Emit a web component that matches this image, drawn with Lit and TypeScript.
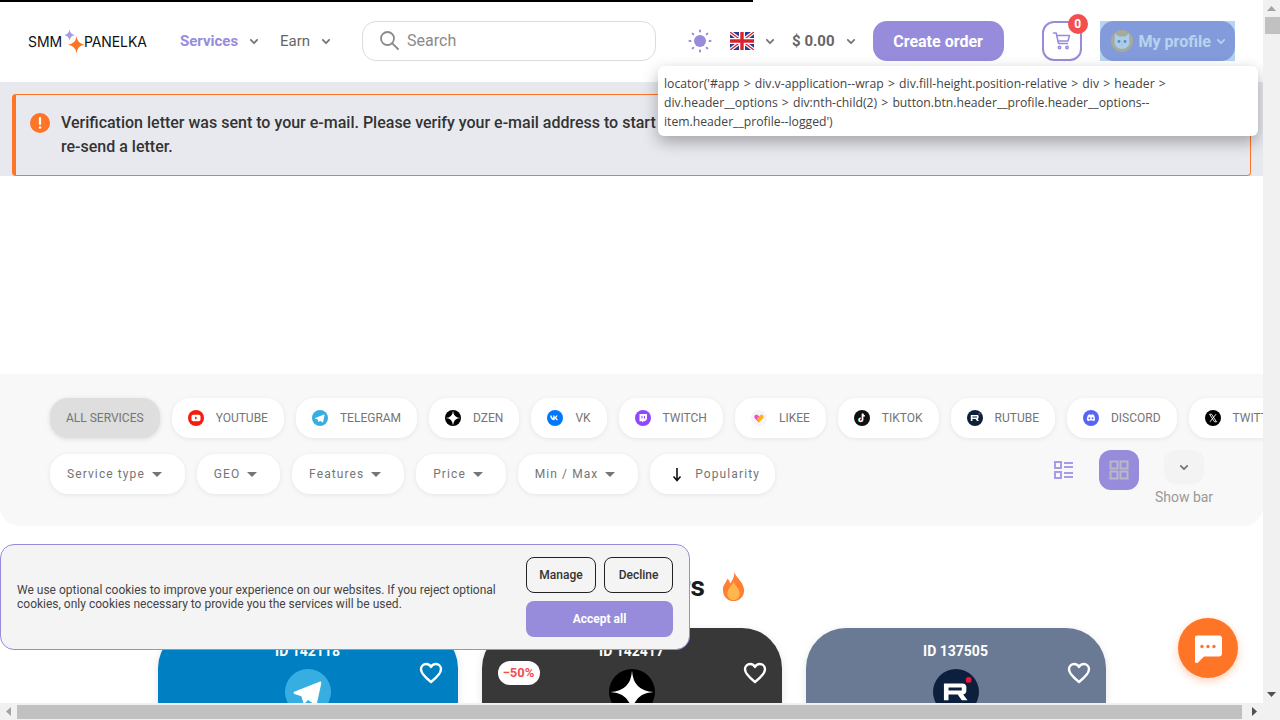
import { LitElement, html, css, svg } from "lit";
import { customElement } from "lit/decorators.js";

const chevron = (color = "#757575") => html`<svg class="chev" width="8" height="5" viewBox="0 0 10 6"><path d="M1 1l4 4 4-4" fill="none" stroke=${color} stroke-width="2.200" stroke-linecap="round" stroke-linejoin="round"/></svg>`;

const star = (cx: number, cy: number, r: number, w: number, fill: string) =>
  svg`<path d="M${cx} ${cy - r}Q${cx + w * 0.25} ${cy - w * 0.25} ${cx + r} ${cy}Q${cx + w * 0.25} ${cy + w * 0.25} ${cx} ${cy + r}Q${cx - w * 0.25} ${cy + w * 0.25} ${cx - r} ${cy}Q${cx - w * 0.25} ${cy - w * 0.25} ${cx} ${cy - r}Z" fill=${fill}/>`;

const heart = html`<svg width="24" height="22" viewBox="0 0 24 22"><path d="M12 20C5 14.5 2 11.300 2 7.300 2 4.200 4.300 2 7.200 2 9.100 2 11 3 12 5 13 3 14.900 2 16.800 2 19.700 2 22 4.200 22 7.300 22 11.300 19 14.500 12 20Z" fill="none" stroke="#fff" stroke-width="2.400" stroke-linejoin="round"/></svg>`;

const plane = (size: number, bg: string) => html`<svg width=${size} height=${size} viewBox="0 0 16 16"><circle cx="8" cy="8" r="8" fill=${bg}/><path d="M3.200 7.900l8.800-3.500c.4-.1.700.1.600.6l-1.500 7c-.1.400-.4.500-.8.300L8 10.800l-1.100 1.100c-.2.200-.4.200-.5-.1l-.7-2.300-2.400-.8c-.4-.2-.4-.6-.1-.8z" fill="#fff"/></svg>`;

const dzen = (size: number) => html`<svg width=${size} height=${size} viewBox="0 0 16 16"><circle cx="8" cy="8" r="8" fill="#000"/><path d="M8 0.500Q8.400 7.600 15.500 8 8.400 8.400 8 15.500 7.600 8.400 0.500 8 7.600 7.600 8 0.500Z" fill="#fff"/></svg>`;

const rutube = (size: number) => html`<svg width=${size} height=${size} viewBox="0 0 16 16"><circle cx="8" cy="8" r="8" fill="#0c1f3c"/><path d="M3.800 5h6.400c.9 0 1.400.5 1.400 1.300v1.300c0 .8-.4 1.200-1.100 1.300l1.500 2h-2l-1.400-2H5.400v2H3.800V5zm1.600 1.400v1.100h4.400c.2 0 .2-.1.200-.2v-.7c0-.1 0-.2-.2-.2H5.400z" fill="#fff"/><circle cx="12.400" cy="3.800" r="1" fill="#ed143b"/></svg>`;

const serviceIcons: Record<string, unknown> = {
  YOUTUBE: html`<svg width="16" height="16" viewBox="0 0 16 16"><circle cx="8" cy="8" r="8" fill="#f61c0d"/><rect x="3.500" y="4.800" width="9" height="6.400" rx="1.800" fill="#fff"/><path d="M7 6.500L9.500 8 7 9.500z" fill="#f61c0d"/></svg>`,
  TELEGRAM: plane(16, "#37aee2"),
  DZEN: dzen(16),
  VK: html`<svg width="16" height="16" viewBox="0 0 16 16"><circle cx="8" cy="8" r="8" fill="#0077ff"/><path d="M3.200 5.400h1.500c.1 1.800.9 2.700 1.500 2.900V5.400h1.400v1.700c.6-.1 1.300-.8 1.500-1.700h1.400c-.2 1.100-1 1.900-1.600 2.300.6.300 1.500 1 1.900 2.500h-1.500c-.3-.9-1-1.600-1.700-1.700v1.700h-.2c-2.600 0-4.100-1.800-4.200-4.800z" fill="#fff"/></svg>`,
  TWITCH: html`<svg width="16" height="16" viewBox="0 0 16 16"><circle cx="8" cy="8" r="8" fill="#9146ff"/><path d="M4.500 4h7.500v5.200L10 11.200H8.300L7 12.500v-1.300H4.500z" fill="#fff"/><path d="M7 6v2.500M9.500 6v2.500" stroke="#9146ff" stroke-width="1"/></svg>`,
  LIKEE: html`<svg width="16" height="16" viewBox="0 0 16 16"><circle cx="8" cy="8" r="8" fill="#f5f5f5"/><path d="M8 12.500L3.800 8.200C2.800 7 3.500 4.800 5.300 4.800 6.500 4.800 7.300 5.500 8 6.300z" fill="#f34ad2"/><path d="M8 12.500l4.200-4.300c1-1.200.3-3.400-1.500-3.400-1.200 0-2 .7-2.700 1.500L6 8.500z" fill="#ffb21a"/></svg>`,
  TIKTOK: html`<svg width="16" height="16" viewBox="0 0 16 16"><circle cx="8" cy="8" r="8" fill="#111"/><path d="M8.600 3.500v6.200a1.700 1.700 0 1 1-1.700-1.700" fill="none" stroke="#25f4ee" stroke-width="1.300" transform="translate(-.5 .3)"/><path d="M8.600 3.500v6.200a1.700 1.700 0 1 1-1.700-1.700" fill="none" stroke="#fe2c55" stroke-width="1.300" transform="translate(.5 .1)"/><path d="M8.600 3.500v6.200a1.700 1.700 0 1 1-1.700-1.700M8.600 3.700c.2 1.400 1.100 2.200 2.400 2.300" fill="none" stroke="#fff" stroke-width="1.200"/></svg>`,
  RUTUBE: rutube(16),
  DISCORD: html`<svg width="16" height="16" viewBox="0 0 16 16"><circle cx="8" cy="8" r="8" fill="#5865f2"/><path d="M5.300 4.800c.7-.3 1.200-.4 1.700-.5l.3.500h1.400l.3-.5c.5.100 1 .2 1.700.5 1 1.500 1.400 3.300 1.300 5.400-.7.500-1.400.8-2 1l-.5-.8c.3-.1.500-.2.700-.4-1.500.7-3 .7-4.500 0 .2.200.4.300.7.400l-.5.800c-.6-.2-1.300-.5-2-1-.1-2.100.3-3.900 1.400-5.400z" fill="#fff"/><circle cx="6.400" cy="8.200" r=".95" fill="#5865f2"/><circle cx="9.600" cy="8.200" r=".95" fill="#5865f2"/></svg>`,
  TWITTER: html`<svg width="16" height="16" viewBox="0 0 16 16"><circle cx="8" cy="8" r="8" fill="#000"/><path d="M4.500 4.200h2l5 7.600h-2zM11 4.200L5 11.800" fill="none" stroke="#fff" stroke-width=".9"/></svg>`,
};

@customElement("app-root")
export class AppRoot extends LitElement {
  static styles = css`
    :host {
      display: grid;
      grid-template-columns: 1263px 17px;
      grid-template-rows: 703px 17px;
      width: 1280px;
      height: 720px;
      overflow: hidden;
      font-family: Roboto, "Liberation Sans", sans-serif;
      background: #fff;
    }
    button { font-family: inherit; border: none; padding: 0; }
    .page { position: relative; overflow: hidden; display: flex; flex-direction: column; }

    .progress { position: absolute; top: 0; left: 0; width: 753px; height: 2px; background: #000; }

    header { flex: none; display: flex; align-items: center; height: 82px; padding: 0 0 0 28px; box-sizing: border-box; }
    .logo { display: flex; align-items: center; width: 120px; font-family: Inter, sans-serif; font-size: 14px; font-weight: 400; letter-spacing: -0.1px; color: #111; }
    .logo svg { flex: none; }
    nav { display: flex; align-items: center; margin-left: 32px; font-size: 15px; }
    .nav-item { display: flex; align-items: center; color: #666; }
    .nav-item.active { color: #968cdb; font-weight: 700; width: 100px; }
    .nav-item .chev { margin-left: 12px; }
    .search { display: flex; align-items: center; gap: 8px; width: 294px; height: 40px; margin-left: 32px; padding: 0 0 2px 16px; box-sizing: border-box; border: 1px solid #dcdcdc; border-radius: 14px; font-size: 16px; color: #8a8a8a; }
    .sun { margin-left: 32px; display: block; }
    .lang { display: flex; align-items: center; margin-left: 18px; gap: 12px; }
    .balance { display: flex; align-items: center; gap: 12px; margin-left: 18px; font-size: 15px; font-weight: 700; color: #666; }
    .create { width: 131px; height: 40px; margin-left: 18px; border-radius: 14px; background: #968cdb; color: #fff; font-size: 16px; font-weight: 700; }
    .cart { position: relative; display: flex; align-items: center; justify-content: center; width: 40px; height: 40px; margin-left: 38px; box-sizing: border-box; border: 2px solid #968cdb; border-radius: 12px; background: #fff; }
    .badge { position: absolute; top: -9px; right: -8px; width: 20px; height: 20px; border-radius: 50%; background: #f44f4f; color: #fff; font-size: 12px; font-weight: 700; line-height: 20px; text-align: center; }
    .profile { position: relative; display: flex; align-items: center; width: 135px; height: 40px; margin-left: 18px; padding-left: 11px; box-sizing: border-box; border-radius: 14px; background: #968cdb; color: #fff; font-size: 16px; font-weight: 700; }
    .profile span { margin-left: 6px; }
    .profile .chev { margin-left: 6px; }
    .highlight { position: absolute; inset: 0; background: rgba(111, 168, 220, 0.5); }

    .notice { flex: none; height: 94px; padding: 12px 12px 0; box-sizing: border-box; background: #e8e9ef; }
    .alert { display: flex; gap: 11px; height: 82px; padding: 16px 14px 0; box-sizing: border-box; border: 1px solid #ff7527; border-left-width: 4px; border-radius: 4px; font-size: 16px; font-weight: 500; line-height: 24px; color: #333; }
    .alert svg { flex: none; margin-top: 2px; }

    .spacer { flex: none; height: 198px; }

    .filters { flex: none; height: 152px; padding: 24px 0 0 50px; box-sizing: border-box; background: #f8f8f8; border-radius: 0 0 20px 20px; position: relative; overflow: hidden; }
    .row { display: flex; gap: 12px; }
    .chip { flex: none; display: flex; align-items: center; gap: 12px; height: 40px; padding: 0 16px; box-sizing: border-box; border-radius: 18px; background: #fff; box-shadow: 0 1px 5px rgba(0, 0, 0, 0.08); font-size: 12px; color: #757575; white-space: nowrap; }
    .chip.current { background: #dedede; box-shadow: 0 1px 5px rgba(0, 0, 0, 0.12); }
    .row.second { margin-top: 16px; }
    .filter { letter-spacing: 1.100px; padding: 0 22.800px 0 17px; gap: 7px; }
    .filter.popularity { padding: 0 15px 0 20px; }
    .caret { width: 0; height: 0; border-left: 5px solid transparent; border-right: 5px solid transparent; border-top: 5px solid #757575; }
    .filter svg { margin-right: 4px; }
    .tools { position: absolute; top: 76px; right: 59px; display: flex; gap: 25px; }
    .tools .list { margin-top: 10px; margin-right: -1px; }
    .grid-btn { display: flex; align-items: center; justify-content: center; width: 40px; height: 40px; border-radius: 12px; background: #968cdb; }
    .show { display: flex; flex-direction: column; align-items: center; gap: 5px; width: 40px; font-size: 14px; color: #999; white-space: nowrap; }
    .show-btn { display: flex; align-items: center; justify-content: center; width: 40px; height: 34px; border-radius: 12px; background: #f3f3f3; }

    .title { flex: none; display: flex; align-items: center; justify-content: center; gap: 17px; height: 102px; padding: 18px 0 0 7px; box-sizing: border-box; font-size: 28px; font-weight: 700; color: #1b1b1b; }
    .cards { display: flex; justify-content: center; gap: 24px; }
    .card { position: relative; flex: none; width: 300px; height: 260px; box-sizing: border-box; padding-top: 15px; border-radius: 40px; box-shadow: 0 2px 8px rgba(0, 0, 0, 0.1); color: #fff; text-align: center; font-size: 14px; font-weight: 700; line-height: 16px; }
    .card .logo-mark { display: block; width: 46px; margin: 10px auto 0; }
    .card .like { position: absolute; top: 34px; right: 15px; }
    .sale { position: absolute; top: 33px; left: 16px; width: 42px; height: 24px; border-radius: 12px; background: #fff; color: #f44f4f; font-size: 13px; line-height: 24px; }

    .tooltip { position: absolute; top: 66px; left: 658px; width: 600px; height: 70px; padding: 8px 6px; box-sizing: border-box; border-radius: 6px; background: #fff; box-shadow: 0 6px 16px rgba(0, 0, 0, 0.3); font-family: "Open Sans", sans-serif; font-size: 12.200px; word-spacing: 1px; line-height: 19px; color: #444; }

    .cookie { position: absolute; left: 0; top: 544px; display: flex; align-items: center; width: 690px; height: 106px; padding: 0 16px; box-sizing: border-box; border: 1px solid #968cdb; border-radius: 14px; background: #f4f4f4; }
    .cookie p { margin: 0; width: 490px; font-size: 12px; line-height: 14px; color: #444; }
    .cookie-actions { display: grid; grid-template-columns: 70px 69px; gap: 8px; margin-left: 19px; }
    .outline { height: 36px; border: 1px solid #222; border-radius: 8px; background: transparent; font-size: 12px; font-weight: 500; color: #333; }
    .accept { grid-column: 1 / 3; height: 36px; border-radius: 8px; background: #968cdb; color: #fff; font-size: 12px; font-weight: 700; }

    .chat { position: absolute; left: 1178px; top: 618px; display: flex; align-items: center; justify-content: center; width: 60px; height: 60px; border-radius: 50%; background: #ff7527; box-shadow: 0 3px 8px rgba(255, 117, 39, 0.35); }

    .vbar, .hbar { background: #f1f1f1; position: relative; display: flex; }
    .vbar { flex-direction: column; align-items: center; justify-content: space-between; grid-row: 1; grid-column: 2; }
    .hbar { align-items: center; grid-row: 2; grid-column: 1; }
    .corner { background: #f1f1f1; }
    .vthumb { position: absolute; top: 17px; left: 2px; width: 15px; height: 17px; background: #c1c1c1; }
    .hthumb { flex: 1; height: 14px; background: #c1c1c1; margin: 0 4px 0 0; }
    .arrow { width: 17px; height: 17px; flex: none; display: flex; align-items: center; justify-content: center; }
  `;

  render() {
    const chips = ["YOUTUBE", "TELEGRAM", "DZEN", "VK", "TWITCH", "LIKEE", "TIKTOK", "RUTUBE", "DISCORD", "TWITTER"];
    const filters = ["Service type", "GEO", "Features", "Price", "Min / Max"];
    return html`
      <div class="page">
        <div class="progress"></div>
        <header>
          <div class="logo">
            <span>SMM</span>
            <svg width="22" height="26" viewBox="0 0 22 26">${star(7.5, 7, 5.5, 3, "#a79be8")}${star(14.5, 16.7, 8.5, 4, "#ff7527")}</svg>
            <span>PANELKA</span>
          </div>
          <nav>
            <div class="nav-item active">Services ${chevron()}</div>
            <div class="nav-item">Earn ${chevron()}</div>
          </nav>
          <div class="search">
            <svg width="20" height="20" viewBox="0 0 20 20"><circle cx="8.500" cy="8.500" r="6.500" fill="none" stroke="#8a8a8a" stroke-width="1.800"/><path d="M13.300 13.300L19 19" stroke="#8a8a8a" stroke-width="1.800" stroke-linecap="round"/></svg>
            Search
          </div>
          <svg class="sun" width="24" height="24" viewBox="0 0 24 24" fill="#968cdb">
            <circle cx="12" cy="12" r="6"/>
            <g stroke="#968cdb" stroke-width="2" stroke-linecap="round"><path d="M12 1.500v1M12 21.500v1M1.500 12h1M21.500 12h1M4.600 4.600l.7.7M18.700 18.700l.7.7M4.600 19.400l.7-.7M18.700 5.300l.7-.7"/></g>
          </svg>
          <div class="lang">
            <svg width="24" height="18" viewBox="0 0 24 18">
              <rect width="24" height="18" fill="#2a3b8f"/>
              <path d="M0 0l24 18M24 0L0 18" stroke="#fff" stroke-width="3.600"/>
              <path d="M0 0l24 18M24 0L0 18" stroke="#d8232f" stroke-width="1.300"/>
              <path d="M12 0v18M0 9h24" stroke="#fff" stroke-width="6"/>
              <path d="M12 0v18M0 9h24" stroke="#d8232f" stroke-width="3.400"/>
            </svg>
            ${chevron()}
          </div>
          <div class="balance">$ 0.00 ${chevron()}</div>
          <button class="create">Create order</button>
          <div class="cart">
            <svg width="20" height="20" viewBox="0 0 20 20" fill="none" stroke="#968cdb" stroke-width="1.500" stroke-linecap="round" stroke-linejoin="round"><path d="M1.500 2h2.700l2.300 10.500h9"/><path d="M4.700 4.500h12.800l-1.500 5.500H6"/><circle cx="7.500" cy="16.500" r="1.200"/><circle cx="15" cy="16.500" r="1.200"/></svg>
            <div class="badge">0</div>
          </div>
          <div class="profile">
            <svg width="22" height="22" viewBox="0 0 22 22"><circle cx="11" cy="11" r="11" fill="#d9ae5a"/><path d="M4 3.500l4 3h6l4-3 .5 9c0 3.500-3.500 6.500-7.500 6.500s-7.500-3-7.500-6.500z" fill="#e8f1fa"/><circle cx="8" cy="11.500" r="1.400" fill="#3f6f9f"/><circle cx="14" cy="11.500" r="1.400" fill="#3f6f9f"/><path d="M10 14.500h2l-1 1z" fill="#d98a8a"/></svg>
            <span>My profile</span>
            ${chevron("#fff")}
            <div class="highlight"></div>
          </div>
        </header>

        <div class="notice">
          <div class="alert">
            <svg width="20" height="20" viewBox="0 0 20 20"><circle cx="10" cy="10" r="10" fill="#ff7527"/><path d="M10 5v6" stroke="#fff" stroke-width="2.200" stroke-linecap="round"/><circle cx="10" cy="14.500" r="1.300" fill="#fff"/></svg>
            <div>Verification letter was sent to your e-mail. Please verify your e-mail address to start using the service. If the letter did not arrive, you can<br />re-send a letter.</div>
          </div>
        </div>

        <div class="spacer"></div>

        <section class="filters">
          <div class="row">
            <div class="chip current">ALL SERVICES</div>
            ${chips.map((c) => html`<div class="chip">${serviceIcons[c]}${c}</div>`)}
          </div>
          <div class="row second">
            ${filters.map((f) => html`<div class="chip filter">${f} <span class="caret"></span></div>`)}
            <div class="chip filter popularity">
              <svg width="14" height="16" viewBox="0 0 14 16"><path d="M7 2v12M3.500 10.500L7 14.500l3.500-4" fill="none" stroke="#111" stroke-width="1.600"/></svg>
              Popularity
            </div>
          </div>
          <div class="tools">
            <svg class="list" width="22" height="20" viewBox="0 0 22 20" fill="none" stroke="#a79be8" stroke-width="2"><rect x="2" y="2" width="6" height="6"/><rect x="2" y="12" width="6" height="6"/><path d="M11 3h9M11 7h9M11 13h9M11 17h9"/></svg>
            <div class="grid-btn">
              <svg width="20" height="20" viewBox="0 0 20 20" fill="none" stroke="#b9b9c6" stroke-width="2"><rect x="1.500" y="1.500" width="7" height="7"/><rect x="11.500" y="1.500" width="7" height="7"/><rect x="1.500" y="11.500" width="7" height="7"/><rect x="11.500" y="11.500" width="7" height="7"/></svg>
            </div>
            <div class="show">
              <div class="show-btn">${chevron()}</div>
              Show bar
            </div>
          </div>
        </section>

        <div class="title">
          <span>Popular offers</span>
          <svg width="23" height="29" viewBox="0 0 26 30" preserveAspectRatio="none"><path d="M14 0c1 5 10 10 11 18 .5 7-5 12-12 12S1 25 1 18c0-5 4-7 5-11 2 1 3 3 3 5 3-3 5-7 5-12z" fill="#ff7f33"/><path d="M13 10c2 4 7 8 7 12 0 4-3 7-7 7s-7-3-7-7c0-4 5-8 7-12z" fill="#ffb74d"/></svg>
        </div>

        <div class="cards">
          <div class="card" style="background:#0080c2">
            ID 142118
            <span class="like">${heart}</span>
            <span class="logo-mark">${plane(46, "#37aee2")}</span>
          </div>
          <div class="card" style="background:#383838">
            ID 142417
            <span class="sale">−50%</span>
            <span class="like">${heart}</span>
            <span class="logo-mark">${dzen(46)}</span>
          </div>
          <div class="card" style="background:#6b7a94">
            ID 137505
            <span class="like">${heart}</span>
            <span class="logo-mark">${rutube(46)}</span>
          </div>
        </div>

        <div class="tooltip">locator('#app &gt; div.v-application--wrap &gt; div.fill-height.position-relative &gt; div &gt; header &gt; div.header__options &gt; div:nth-child(2) &gt; button.btn.header__profile.header__options--item.header__profile--logged')</div>

        <div class="cookie">
          <p>We use optional cookies to improve your experience on our websites. If you reject optional cookies, only cookies necessary to provide you the services will be used.</p>
          <div class="cookie-actions">
            <button class="outline">Manage</button>
            <button class="outline">Decline</button>
            <button class="accept">Accept all</button>
          </div>
        </div>

        <div class="chat">
          <svg width="30" height="30" viewBox="0 -1.500 30 30"><path d="M4 1h22a3 3 0 0 1 3 3v15a3 3 0 0 1-3 3H11l-6 6c-1 1-3 1-3-1V3a2 2 0 0 1 2-2z" fill="#fff"/><circle cx="9" cy="12" r="1.700" fill="#ff7527"/><circle cx="15" cy="12" r="1.700" fill="#ff7527"/><circle cx="21" cy="12" r="1.700" fill="#ff7527"/></svg>
        </div>
      </div>

      <div class="vbar">
        <div class="arrow"><svg width="9" height="5" viewBox="0 0 9 5"><path d="M4.500 0L9 5H0z" fill="#a3a3a3"/></svg></div>
        <div class="vthumb"></div>
        <div class="arrow"><svg width="9" height="5" viewBox="0 0 9 5"><path d="M0 0h9L4.500 5z" fill="#505050"/></svg></div>
      </div>
      <div class="hbar">
        <div class="arrow"><svg width="5" height="9" viewBox="0 0 5 9"><path d="M5 0v9L0 4.500z" fill="#a3a3a3"/></svg></div>
        <div class="hthumb"></div>
        <div class="arrow"><svg width="5" height="9" viewBox="0 0 5 9"><path d="M0 0l5 4.500L0 9z" fill="#505050"/></svg></div>
      </div>
      <div class="corner"></div>
    `;
  }
}
